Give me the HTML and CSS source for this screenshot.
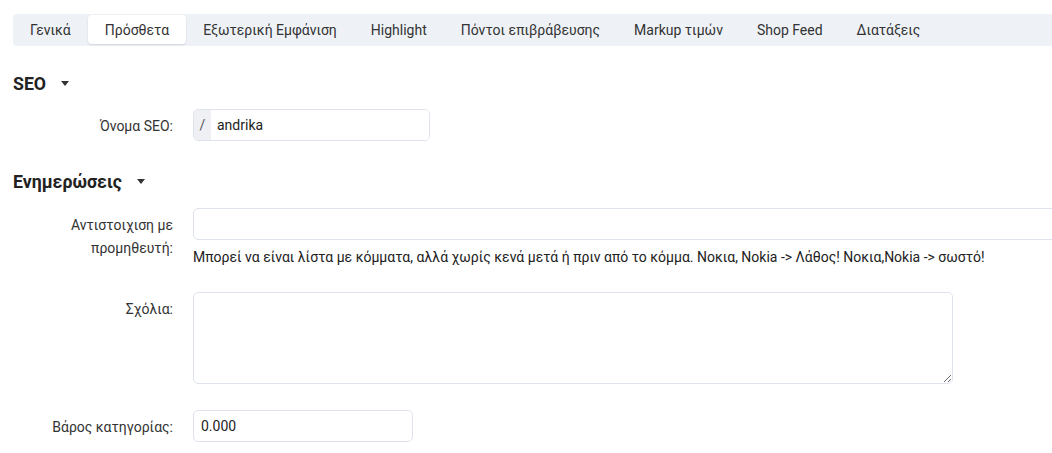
FILE: index.html
```html
<!DOCTYPE html>
<html lang="el">
<head>
    <meta charset="UTF-8">
    <title>Κατηγορία - Πρόσθετα</title>
    <link rel="stylesheet" href="styles.css">
</head>
<body>

<div class="page">

    <ul class="tabs">
        <li class="tab">Γενικά</li>
        <li class="tab active">Πρόσθετα</li>
        <li class="tab">Εξωτερική Εμφάνιση</li>
        <li class="tab">Highlight</li>
        <li class="tab">Πόντοι επιβράβευσης</li>
        <li class="tab">Markup τιμών</li>
        <li class="tab">Shop Feed</li>
        <li class="tab">Διατάξεις</li>
    </ul>

    <h2 class="section-title">SEO<span class="caret"></span></h2>

    <div class="form-row">
        <label class="form-label" for="seo">Όνομα SEO:</label>
        <div class="form-field">
            <div class="input-group seo-group">
                <span class="addon">/</span>
                <input type="text" id="seo" class="input" value="andrika">
            </div>
        </div>
    </div>

    <h2 class="section-title updates">Ενημερώσεις<span class="caret"></span></h2>

    <div class="form-row">
        <label class="form-label" for="supplier">Αντιστοιχιση με προμηθευτή:</label>
        <div class="form-field">
            <input type="text" id="supplier" class="input wide">
            <p class="help">Μπορεί να είναι λίστα με κόμματα, αλλά χωρίς κενά μετά ή πριν από το κόμμα. Νοκια, Nokia -&gt; Λάθος! Νοκια,Nokia -&gt; σωστό!</p>
        </div>
    </div>

    <div class="form-row">
        <label class="form-label" for="comments">Σχόλια:</label>
        <div class="form-field">
            <textarea id="comments" class="input textarea"></textarea>
        </div>
    </div>

    <div class="form-row">
        <label class="form-label" for="weight">Βάρος κατηγορίας:</label>
        <div class="form-field">
            <input type="text" id="weight" class="input short" value="0.000">
        </div>
    </div>

</div>

</body>
</html>
```

FILE: styles.css
```css
html, body {
    margin: 0;
    overflow: hidden;
}
body {
    background-color: #fff;
    font-family: Roboto, "Liberation Sans", Arial, sans-serif;
    font-size: 14px;
    color: #222;
}
.page {
    width: 1120px;
    padding: 14px 0 0 13px;
}
.tabs {
    display: flex;
    list-style: none;
    margin: 0;
    padding: 1px 0 2px;
    background-color: #eef2f7;
    border-radius: 4px;
    height: 29px;
}
.tab {
    padding: 1px 17px 0;
    line-height: 28px;
    color: #333;
    border-radius: 4px;
}
.tab.active {
    background-color: #fff;
    box-shadow: 0 1px 2px rgba(0, 0, 0, 0.12);
}
.section-title {
    display: flex;
    align-items: center;
    margin: 27px 0 0;
    font-size: 17.7px;
    font-weight: bold;
    color: #222;
    height: 22px;
}
.section-title.updates {
    margin-top: 30px;
}
.caret {
    display: inline-block;
    margin-left: 15px;
    margin-top: -2px;
    border-left: 4px solid transparent;
    border-right: 4px solid transparent;
    border-top: 5px solid #333;
}
.form-row {
    display: flex;
}
.section-title + .form-row {
    margin-top: 14px;
}
.updates + .form-row {
    margin-top: 15px;
}
.form-row + .form-row {
    margin-top: 26px;
}
.form-label {
    width: 160px;
    flex: none;
    text-align: right;
    padding-right: 20px;
    padding-top: 6px;
    line-height: 23px;
    color: #333;
}
.form-field {
    flex: 1;
}
.input {
    box-sizing: border-box;
    height: 32px;
    border: 1px solid #dfe3ee;
    border-radius: 5px;
    padding: 0 7px;
    font-family: Roboto, "Liberation Sans", Arial, sans-serif;
    font-size: 14px;
    color: #222;
    background: #fff;
    display: block;
}
.input-group {
    display: flex;
    border: 1px solid #dfe3ee;
    border-radius: 5px;
    overflow: hidden;
}
.seo-group {
    width: 237px;
    box-sizing: border-box;
}
.input-group .input {
    border: none;
    border-radius: 0;
    height: 30px;
    flex: 1;
    padding-left: 6px;
}
.addon {
    background-color: #eef0f4;
    color: #555;
    width: 17px;
    text-align: center;
    line-height: 30px;
}
.wide {
    width: 100%;
}
.short {
    width: 220px;
}
.textarea {
    width: 760px;
    height: 92px;
    resize: both;
}
.help {
    margin: 8px 0 0;
    line-height: 18px;
    color: #222;
}
```
